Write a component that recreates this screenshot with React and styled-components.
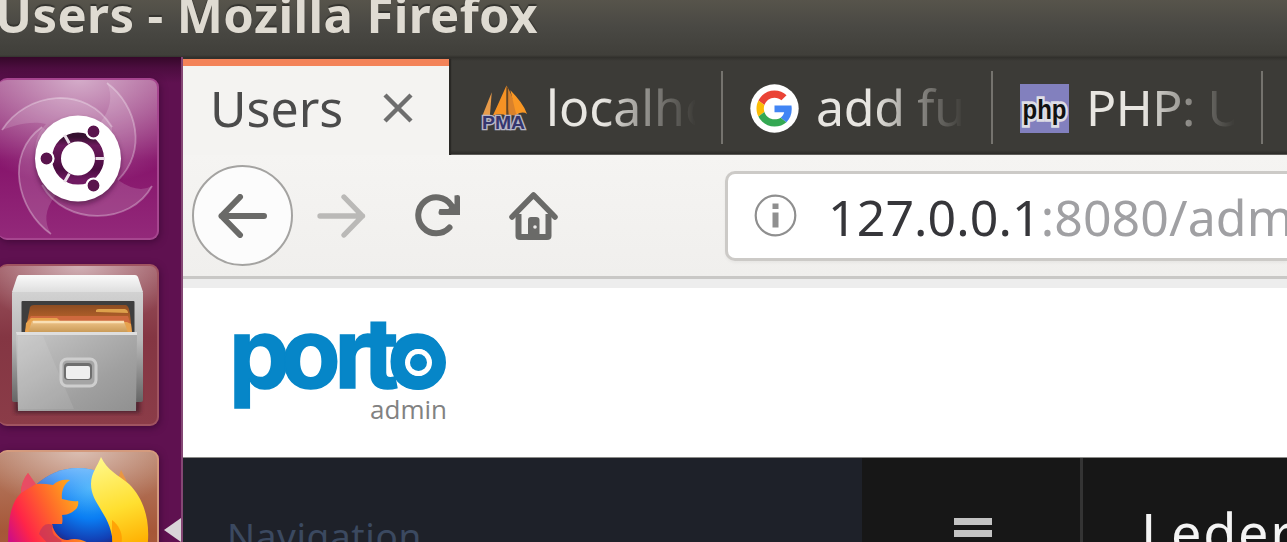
import React from "react";
import styled, { createGlobalStyle } from "styled-components";

const GlobalStyle = createGlobalStyle`
  html, body { margin: 0; padding: 0; overflow: hidden; }
  * { box-sizing: border-box; }
  svg { display: block; flex: none; }
`;

const Desktop = styled.div`
  width: 1287px;
  height: 542px;
  overflow: hidden;
  display: flex;
  flex-direction: column;
  background: #3c3b37;
  font-family: "Noto Sans", "Open Sans", sans-serif;
  white-space: nowrap;
`;

const TitleBar = styled.header`
  flex: none;
  height: 57px;
  overflow: hidden;
  background: linear-gradient(#57544b 0, #4a4944 25px, #403f3a 55px, #34332f 57px);
`;

const WindowTitle = styled.div`
  height: 30px;
  margin-left: -5px;
  line-height: 29px;
  font-size: 49px;
  font-weight: 700;
  letter-spacing: 0.4px;
  color: #dfdbd2;
  text-shadow: 0 -2px 1px #34332f;
`;

const Screen = styled.div`
  flex: 1;
  min-height: 0;
  display: flex;
`;

const Launcher = styled.nav`
  position: relative;
  flex: none;
  width: 183px;
  padding-top: 21px;
  display: flex;
  flex-direction: column;
  gap: 24px;
  overflow: hidden;
  border-right: 2px solid #844774;
  background: linear-gradient(#350829 0, #4c0d3f 11px, #5f1150 26px);
`;

const LauncherTile = styled.div`
  flex: none;
  width: 161px;
  height: 162px;
  margin-left: -2px;
  padding-left: 2px;
  overflow: hidden;
  border-radius: 9px;
  border: 2px solid ${(p) => p.$edge};
  border-left: 0;
  background: ${(p) => p.$fill};
  box-shadow: 1px 2px 7px rgba(40, 0, 35, 0.5);

  svg { margin-top: -2px; }
`;

const RunningArrow = styled.div`
  position: absolute;
  right: 0;
  top: 461px;
  border: 12px solid transparent;
  border-left: 0;
  border-right: 17px solid #d9d5d8;
`;

const Browser = styled.main`
  flex: 1;
  min-width: 0;
  display: flex;
  flex-direction: column;
  background: #fff;
`;

const TabStrip = styled.div`
  flex: none;
  height: 98px;
  display: flex;
  padding-top: 2px;
  background: linear-gradient(#302f2b 0, #3c3b37 4px, #3c3b37 93px, #2b2a27 97px, #8f8d89 98px);
`;

const ActiveTab = styled.div`
  flex: none;
  width: 266px;
  height: 96px;
  margin-right: 4px;
  padding: 0 36px 5px 27px;
  display: flex;
  align-items: center;
  justify-content: space-between;
  border-top: 7px solid #f38359;
  background: #f4f3f1;
  box-shadow: 2px 0 1px #292825;
`;

const Tab = styled.div`
  flex: none;
  width: 270px;
  height: 73px;
  margin-top: 12px;
  padding-left: 27px;
  display: flex;
  align-items: center;
  gap: 17px;
  border-right: 2px solid #75736e;

  & > svg { margin-top: 1px; }
`;

const TabLabel = styled.span`
  width: ${(p) => p.$width || "auto"};
  overflow: hidden;
  height: 70px;
  line-height: ${(p) => (p.$active ? "70px" : "68px")};
  font-size: 50px;
  letter-spacing: ${(p) => p.$spacing || "0"};
  color: ${(p) => (p.$active ? "#4b4b4b" : "#e8e6e1")};
  ${(p) => !p.$active && "mask-image: linear-gradient(90deg, #000 38%, rgba(0,0,0,.35) 76%, transparent 100%);"}
`;

const Toolbar = styled.div`
  flex: none;
  height: 121px;
  padding: 0 0 0 9px;
  display: flex;
  align-items: center;
  background: linear-gradient(#f5f4f2, #f0efed);
`;

const BackButton = styled.div`
  width: 101px;
  height: 101px;
  margin-right: 24px;
  display: grid;
  place-items: center;
  border: 2px solid #a4a3a1;
  border-radius: 50%;
  background: #fcfcfc;
`;

const ToolButtons = styled.div`
  width: 408px;
  display: flex;
  align-items: center;
  gap: 48.5px;
`;

const AddressBar = styled.div`
  flex: 1;
  min-width: 0;
  height: 90px;
  padding-left: 26px;
  display: flex;
  align-items: center;
  gap: 31px;
  overflow: hidden;
  border: 3px solid #cccac7;
  border-right: 0;
  border-radius: 10px 0 0 10px;
  background: #fff;
  box-shadow: 0 2px 3px rgba(0, 0, 0, 0.04);
`;

const Address = styled.span`
  line-height: 82px;
  height: 80px;
  font-size: 50px;
  letter-spacing: 0.1px;
  color: #a0a0a3;
`;

const Host = styled.span`
  color: #36363a;
`;

const ToolbarEdge = styled.div`
  flex: none;
  height: 12px;
  border-top: 3px solid #c9c8c6;
  background: #ededed;
`;

const SiteHeader = styled.div`
  flex: none;
  height: 170px;
  padding: 23px 0 0 41px;
  border-bottom: 1px solid #8c8c89;
`;

const SiteBar = styled.div`
  flex: 1;
  min-height: 0;
  display: flex;
  overflow: hidden;
  background: #171717;
`;

const NavigationPanel = styled.div`
  flex: none;
  width: 679px;
  padding: 53px 0 0 44px;
  font-size: 37px;
  line-height: 50px;
  letter-spacing: 0.6px;
  color: #3b4960;
  background: #1e2129;
`;

const MenuToggle = styled.div`
  flex: none;
  width: 221px;
  padding: 60px 0 0 92px;
  border-right: 3px solid #343434;
  display: flex;
  flex-direction: column;
  gap: 5px;
`;

const MenuLine = styled.i`
  flex: none;
  width: 38px;
  height: 7px;
  background: #c3c3c3;
`;

const MenuItem = styled.div`
  padding: 44px 0 0 58px;
  font-size: 54px;
  line-height: 60px;
  letter-spacing: 1.7px;
  color: #f4f4f4;
`;

function DashIcon() {
  return (
    <svg width="159" height="162" viewBox="0 0 159 162">
      <defs>
        <radialGradient id="dashGlow" cx="0.5" cy="0" r="0.9">
          <stop offset="0" stopColor="#fff" stopOpacity="0.55" />
          <stop offset="1" stopColor="#fff" stopOpacity="0" />
        </radialGradient>
        <linearGradient id="ring" x1="0" y1="0" x2="0" y2="1">
          <stop offset="0" stopColor="#35102f" />
          <stop offset=".2" stopColor="#6b1a5c" />
          <stop offset=".75" stopColor="#4a0c40" />
          <stop offset="1" stopColor="#701a62" />
        </linearGradient>
        <filter id="soft" x="-30%" y="-30%" width="160%" height="160%"><feGaussianBlur stdDeviation="2.5" /></filter>
      </defs>
      <rect width="159" height="120" fill="url(#dashGlow)" />
      <g fill="none" stroke="#fff" strokeOpacity=".3" strokeWidth="1.8">
        <path d="M2 52C26 14 86 6 112 49" />
        <path d="M107 5C138 28 147 74 118 102" />
        <path d="M152 108C131 147 65 149 42 107" />
        <path d="M51 156C17 132 4 76 42 49" />
      </g>
      <g fill="#fff" fillOpacity=".15">
        <path d="M2 52C26 14 86 6 112 49L110 104L46 104L35 70C36 58 42 50 46 46C30 42 12 48 2 52Z" />
        <path d="M107 5C138 28 147 74 118 102L80 80L100 45Q116 24 107 5Z" />
        <path d="M152 108C131 147 65 149 42 107L78 80L118 102Q138 116 152 108Z" />
        <path d="M51 156C17 132 4 76 42 49L78 80L55 118Q40 138 51 156Z" />
      </g>
      <circle cx="78" cy="84" r="43" fill="#3a0a34" opacity=".55" filter="url(#soft)" />
      <circle cx="78" cy="80.5" r="43" fill="#fff" />
      <circle cx="78" cy="80.5" r="21.5" fill="none" stroke="url(#ring)" strokeWidth="9" />
      <path d="M95.5 80.5H105M69.3 65.3L64.5 57.1M69.3 95.7L64.5 103.9" stroke="#eadfe8" strokeWidth="3" />
      <g fill="#5a144d" stroke="#fff" strokeWidth="2.2"><circle cx="46.5" cy="80.5" r="7" /><circle cx="93.5" cy="53.5" r="7" /><circle cx="93.5" cy="107.5" r="7" /></g>
    </svg>
  );
}

function FilesIcon() {
  return (
    <svg width="159" height="162" viewBox="0 0 159 162">
      <defs>
        <radialGradient id="filesGlow" cx=".5" cy="0" r=".65"><stop offset="0" stopColor="#fff" stopOpacity=".55" /><stop offset="1" stopColor="#fff" stopOpacity="0" /></radialGradient>
        <linearGradient id="lid" x1="0" y1="0" x2="0" y2="1"><stop stopColor="#fafafa" /><stop offset="1" stopColor="#dedede" /></linearGradient>
        <linearGradient id="body" x1="0" y1="0" x2="0" y2="1"><stop stopColor="#d2d2d2" /><stop offset=".45" stopColor="#b8b8b8" /><stop offset="1" stopColor="#666" /></linearGradient>
        <linearGradient id="drawer" x1="0" y1="0" x2="1" y2="1"><stop stopColor="#c8c8c8" /><stop offset=".65" stopColor="#a0a0a0" /><stop offset="1" stopColor="#909090" /></linearGradient>
        <linearGradient id="rear" x1="0" y1="0" x2="0" y2="1"><stop stopColor="#8c4c22" /><stop offset="1" stopColor="#dc7732" /></linearGradient>
        <linearGradient id="front" x1="0" y1="0" x2="0" y2="1"><stop stopColor="#efc489" /><stop offset="1" stopColor="#c79854" /></linearGradient>
        <filter id="filesSoft"><feGaussianBlur stdDeviation="2" /></filter>
      </defs>
      <rect width="159" height="100" fill="url(#filesGlow)" />
      <rect x="15" y="122" width="125" height="27" fill="#421c2a" opacity=".8" filter="url(#filesSoft)" />
      <rect x="12" y="27" width="131" height="111" rx="2" fill="url(#body)" />
      <path d="M19 11H135Q137 11 138 13L143 28H12L17 13Q18 11 19 11Z" fill="url(#lid)" />
      <rect x="21.5" y="37" width="113" height="32" rx="1" fill="#3e3e3e" />
      <path d="M30 43Q31 41 34 41H126Q129 42 130 50L132 69H25Z" fill="url(#rear)" />
      <path d="M96 48V46Q97 45 99 45H125Q128 46 128 49Z" fill="#dda04b" />
      <path d="M28 56L31 52H128L131 62V69H25Z" fill="#ce693e" />
      <path d="M26 59L31 54H57L61 58H127L131 60L132 69H25Z" fill="#e7a34e" />
      <path d="M32 57H124L128 69H28Z" fill="url(#front)" />
      <path d="M33 58H124" stroke="#f9dfb4" strokeWidth="2.5" />
      <path d="M16 68H137L136 147H18Z" fill="url(#drawer)" />
      <path d="M16 68H137V71H17Z" fill="#dedede" />
      <path d="M43 72L74 145H18V72Z" fill="#fff" opacity=".09" />
      <rect x="61" y="95" width="35" height="27" rx="6" fill="#a5a5a5" stroke="#cecece" strokeWidth="3" />
      <rect x="64" y="99" width="28" height="17" rx="4" fill="#6e6e6e" />
      <rect x="66" y="102" width="24" height="13" rx="2" fill="#efefef" />
    </svg>
  );
}

function FirefoxIcon() {
  return (
    <svg width="159" height="162" viewBox="0 0 159 162">
      <defs>
        <radialGradient id="foxGlow" cx=".5" cy="0" r=".65"><stop stopColor="#fff" stopOpacity=".5" /><stop offset="1" stopColor="#fff" stopOpacity="0" /></radialGradient>
        <radialGradient id="globe" gradientUnits="userSpaceOnUse" cx="90" cy="38" r="62"><stop stopColor="#38b4f8" /><stop offset=".5" stopColor="#0a7df3" /><stop offset=".85" stopColor="#123fb4" /><stop offset="1" stopColor="#252170" /></radialGradient>
        <linearGradient id="globeSheen" x1="0" y1="0" x2="0" y2="1"><stop stopColor="#9ed0ff" stopOpacity=".7" /><stop offset=".38" stopColor="#559fff" stopOpacity="0" /></linearGradient>
        <linearGradient id="fox" gradientUnits="userSpaceOnUse" x1="7" y1="82" x2="76" y2="48"><stop stopColor="#d00f82" /><stop offset=".25" stopColor="#ff2548" /><stop offset=".62" stopColor="#ff652b" /><stop offset="1" stopColor="#ffa51c" /></linearGradient>
        <linearGradient id="tail" gradientUnits="userSpaceOnUse" x1="108" y1="8" x2="137" y2="96"><stop stopColor="#fff786" /><stop offset=".55" stopColor="#ffdf30" /><stop offset="1" stopColor="#ffae00" /></linearGradient>
      </defs>
      <rect width="159" height="93" fill="url(#foxGlow)" />
      <circle cx="78" cy="79" r="61" fill="url(#globe)" />
      <circle cx="78" cy="79" r="61" fill="url(#globeSheen)" />
      <path d="M118 29L121 20L128 34Z" fill="#e99642" />
      <path d="M101 7C97 17 91 23 91 34C91 56 114 65 113 100H147C151 73 145 50 129 34C118 25 107 20 101 7Z" fill="url(#tail)" />
      <path d="M112 70C123 78 124 92 119 99H112Z" fill="#ff9a00" opacity=".8" />
      <path d="M28 23C24 29 21 35 21 43C10 54 8 70 8 99H96C87 90 76 87 68 90C62 91 54 84 52 74H62Q63 70 62 65C69 65 73 62 77 58Q79 54 78 51C73 52 68 50 62 49C61 41 64 34 70 30C62 29 57 31 53 35Q42 33 35 34Z" fill="url(#fox)" />
      <path d="M39 84Q43 71 53 75Q51 80 54 85L62 91L53 99Z" fill="#bd345d" opacity=".65" />
      <path d="M28 23Q21 31 21 43L36 34Z" fill="#e94c64" />
    </svg>
  );
}

function SailsIcon() {
  return (
    <svg width="49" height="50" viewBox="0 0 50 50">
      <path d="M12 9L2 34H10Z" fill="#e89b4a" />
      <path d="M27 2Q19 20 13 33Q21 30 27 33Z" fill="#f69224" />
      <path d="M27 2Q35 15 38 33L29 32Z" fill="#da822b" />
      <path d="M31 7Q44 20 48 31Q43 28 37 32Z" fill="#f99724" />
      <path d="M28 4V32" stroke="#684521" strokeWidth="1.5" />
      <text x="2" y="46.5" textLength="44" lengthAdjust="spacingAndGlyphs" fontFamily="Liberation Sans" fontWeight="700" fontSize="18" fill="#35366f" stroke="#b7b5c5" strokeWidth="2.8" paintOrder="stroke">PMA</text>
    </svg>
  );
}

function GoogleIcon() {
  return (
    <svg width="49" height="49" viewBox="0 0 49 49">
      <circle cx="24.5" cy="24.5" r="24.2" fill="#fff" />
      <g transform="translate(6.5 6.5) scale(.75)">
        <path fill="#EA4335" d="M24 9.5c3.54 0 6.71 1.22 9.21 3.6l6.85-6.85C35.9 2.38 30.47 0 24 0 14.62 0 6.51 5.38 2.56 13.22l7.98 6.19C12.43 13.72 17.74 9.5 24 9.5z" />
        <path fill="#4285F4" d="M46.98 24.55c0-1.57-.15-3.09-.38-4.55H24v9.02h12.94c-.58 2.96-2.26 5.48-4.78 7.18l7.73 6c4.51-4.18 7.09-10.36 7.09-17.65z" />
        <path fill="#FBBC05" d="M10.53 28.59c-.48-1.45-.76-2.99-.76-4.59s.27-3.14.76-4.59l-7.98-6.19C.92 16.46 0 20.12 0 24c0 3.88.92 7.54 2.56 10.78l7.97-6.19z" />
        <path fill="#34A853" d="M24 48c6.48 0 11.93-2.13 15.89-5.81l-7.73-6c-2.15 1.45-4.92 2.3-8.16 2.3-6.26 0-11.57-4.22-13.47-9.91l-7.98 6.19C6.51 42.62 14.62 48 24 48z" />
      </g>
    </svg>
  );
}

function PhpIcon() {
  return (
    <svg width="49" height="49" viewBox="0 0 49 49">
      <rect width="49" height="49" fill="#8280be" />
      <text x="2.5" y="34.5" textLength="44" lengthAdjust="spacingAndGlyphs" fontFamily="Liberation Sans" fontWeight="700" fontSize="28" fill="#111" stroke="#dedde5" strokeWidth="5.5" paintOrder="stroke">php</text>
    </svg>
  );
}

function CloseIcon() {
  return <svg width="30" height="30" viewBox="0 0 30 30"><path d="M2 2L28 28M28 2L2 28" stroke="#6e6e6e" strokeWidth="4.4" /></svg>;
}

function ArrowIcon({ forward }) {
  return (
    <svg width="49" height="44" viewBox="0 0 49 44">
      <path transform={forward ? "translate(49 0) scale(-1 1)" : undefined} d="M22 3L3.5 22L22 41M3.5 22H46" fill="none" stroke={forward ? "#bab9b7" : "#6a6a68"} strokeWidth={forward ? 5.3 : 6} strokeLinecap="round" strokeLinejoin="round" />
    </svg>
  );
}

function ReloadIcon() {
  return (
    <svg width="46" height="44" viewBox="0 0 46 44">
      <path d="M34.5 33.5A18 18 0 1 1 36 11L39 16" fill="none" stroke="#6a6a68" strokeWidth="6" strokeLinecap="round" />
      <path d="M39.5 1.5Q45 0 45 3V21H26Q22 21 24.5 15H33L39.5 10Z" fill="#6a6a68" />
    </svg>
  );
}

function HomeIcon() {
  return (
    <svg width="49" height="50" viewBox="0 0 49 50">
      <path d="M3 26L24.5 4L46 26" fill="none" stroke="#6a6a68" strokeWidth="5.5" strokeLinejoin="round" strokeLinecap="round" />
      <path d="M9.5 23V45Q9.5 46 11 46H38Q39.5 46 39.5 45V23" fill="none" stroke="#6a6a68" strokeWidth="6" />
      <path d="M19 46V29Q19 26 22 26H27Q30.5 26 30.5 29V46Z" fill="#6a6a68" />
      <circle cx="26" cy="36" r="1.8" fill="#ecebe9" />
    </svg>
  );
}

function InfoIcon() {
  return (
    <svg width="43" height="43" viewBox="0 0 43 43">
      <circle cx="21.5" cy="21.5" r="19.8" fill="none" stroke="#8f8f8f" strokeWidth="2.2" />
      <path d="M18.5 9.5H24.5V15H18.5ZM18.5 18.5H24.5V33.5H18.5Z" fill="#8f8f8f" />
    </svg>
  );
}

function PortoLogo() {
  return (
    <svg width="230" height="112" viewBox="0 0 230 112">
      <text y="77" x="5 57 110.5 139 163.5" fontFamily="Inter" fontWeight="700" fontSize="97" fill="#0686c8" stroke="#0686c8" strokeWidth="1.6">porto</text>
      <circle cx="194.5" cy="51.5" r="20.5" fill="none" stroke="#0686c8" strokeWidth="14" />
      <circle cx="194.5" cy="51.5" r="13.5" fill="#fff" />
      <circle cx="194.5" cy="51.5" r="8.5" fill="#0686c8" />
      <text x="146" y="108" textLength="77" fontFamily="Open Sans" fontSize="26" fill="#828282">admin</text>
    </svg>
  );
}

export default function App() {
  return (
    <Desktop>
      <GlobalStyle />
      <TitleBar><WindowTitle>Users - Mozilla Firefox</WindowTitle></TitleBar>
      <Screen>
        <Launcher>
          <LauncherTile $edge="#a6468f" $fill="linear-gradient(#a04888, #86146b 50%, #93297a)"><DashIcon /></LauncherTile>
          <LauncherTile $edge="#a05460" $fill="linear-gradient(#9c5660, #843643 45%, #8b3c48)"><FilesIcon /></LauncherTile>
          <LauncherTile $edge="#d49a7d" $fill="linear-gradient(#b78068, #a65738 50%, #b0633f)"><FirefoxIcon /></LauncherTile>
          <RunningArrow />
        </Launcher>
        <Browser>
          <TabStrip>
            <ActiveTab><TabLabel $active>Users</TabLabel><CloseIcon /></ActiveTab>
            <Tab><SailsIcon /><TabLabel $width="150px">localho</TabLabel></Tab>
            <Tab><GoogleIcon /><TabLabel $width="149px" $spacing="-0.3px">add fu</TabLabel></Tab>
            <Tab><PhpIcon /><TabLabel $width="149px" $spacing="-0.5px">PHP: U</TabLabel></Tab>
          </TabStrip>
          <Toolbar>
            <BackButton><ArrowIcon /></BackButton>
            <ToolButtons><ArrowIcon forward /><ReloadIcon /><HomeIcon /></ToolButtons>
            <AddressBar>
              <InfoIcon />
              <Address><Host>127.0.0.1</Host>:8080/adm</Address>
            </AddressBar>
          </Toolbar>
          <ToolbarEdge />
          <SiteHeader><PortoLogo /></SiteHeader>
          <SiteBar>
            <NavigationPanel>Navigation</NavigationPanel>
            <MenuToggle><MenuLine /><MenuLine /><MenuLine /></MenuToggle>
            <MenuItem>Leder</MenuItem>
          </SiteBar>
        </Browser>
      </Screen>
    </Desktop>
  );
}
